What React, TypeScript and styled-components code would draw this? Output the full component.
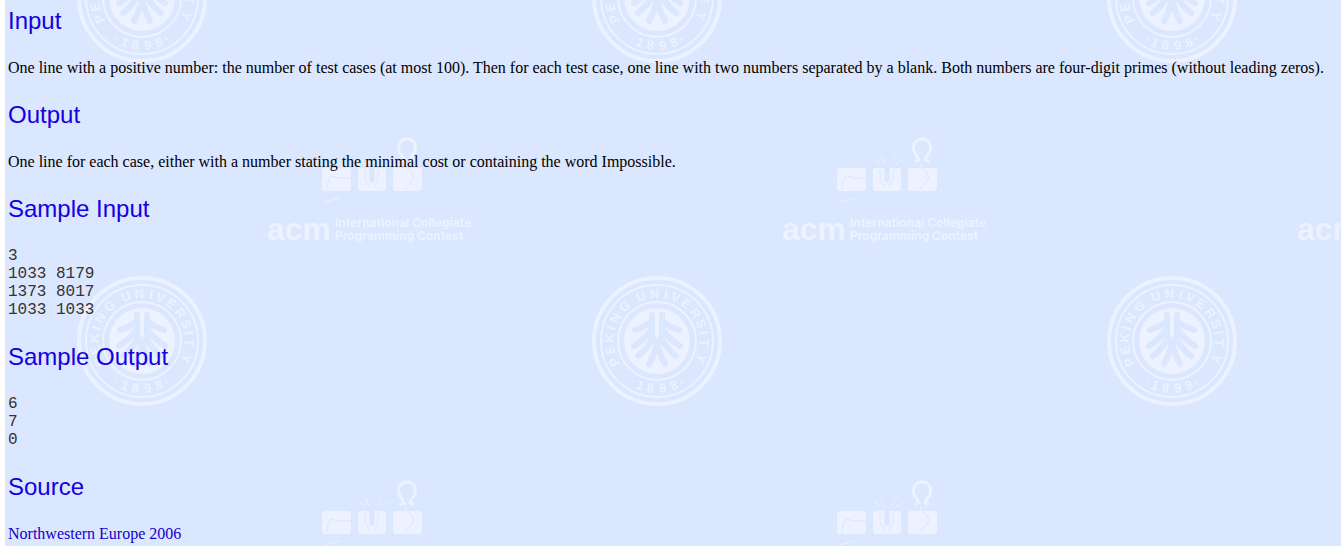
import React from "react";
import styled, { createGlobalStyle } from "styled-components";

const GlobalStyle = createGlobalStyle`
  body {
    margin: 0;
    background: #ffffff;
  }
`;

const Page = styled.main`
  position: relative;
  margin: 0 0 4px 5px;
  padding: 7px 3px 3px;
  background: #dbe6ff;
  overflow: hidden;
`;

const Backdrop = styled.svg`
  position: absolute;
  top: 0;
  left: 0;
  width: 100%;
  height: 100%;
  pointer-events: none;
`;

const Content = styled.article`
  position: relative;
  display: flex;
  flex-direction: column;
  gap: 24px;
`;

const Section = styled.section`
  display: flex;
  flex-direction: column;
  gap: 24px;
`;

const Heading = styled.h2`
  margin: 0;
  color: #1400e0;
  font: 400 24px/28px Arial, "Liberation Sans", sans-serif;
`;

const Paragraph = styled.p`
  margin: 0;
  color: #000000;
  font: 400 16px/18px "Times New Roman", "Liberation Serif", serif;
`;

const Sample = styled.pre`
  margin: 0;
  color: #333333;
  font: 400 16px/18px "Courier New", "Liberation Mono", monospace;
`;

const SourceLink = styled.a`
  color: #1400c8;
  text-decoration: none;
`;

const SealLetter = styled.text`
  font: 700 13px "Liberation Sans", sans-serif;
  text-anchor: middle;
`;

const AcmText = styled.text`
  font: 700 32px "Liberation Sans", sans-serif;
`;

const ContestText = styled.text`
  font: 700 12px Inter, "Liberation Sans", sans-serif;
`;

const MARK = "#ecf2ff";
const PAPER = "#dbe6ff";

// Each letter of the seal with its angle, clockwise from the top.
const SEAL_NAME: [string, number][] = [
  ["P", -116],
  ["E", -101],
  ["K", -86],
  ["I", -74],
  ["N", -61],
  ["G", -43],
  ["U", -20],
  ["N", -3],
  ["I", 11],
  ["V", 23],
  ["E", 38],
  ["R", 54],
  ["S", 69],
  ["I", 80],
  ["T", 92],
  ["Y", 112],
];

// The year reads upright along the bottom of the ring.
const SEAL_YEAR: [string, number][] = [
  ["·", 31],
  ["1", 21],
  ["8", 8],
  ["9", -7],
  ["8", -21],
  ["·", -31],
];

function Seal() {
  return (
    <g transform="translate(137 66)" fill="none" stroke={MARK}>
      <circle r="63" strokeWidth="4" />
      <circle r="56" strokeWidth="2" />
      <circle r="39" strokeWidth="2" />
      <circle r="33" fill={MARK} stroke="none" />
      <g stroke={PAPER} strokeWidth="6" strokeLinecap="round" strokeLinejoin="round">
        <path d="M-5 -26 V-4 L0 4 M-5 -20 Q-12 -14 -22 -11 M-5 -12 Q-12 -2 -23 5 M-4 -3 Q-10 8 -19 15 M0 2 Q-3 14 -8 23" />
        <path d="M5 -26 V-4 L0 4 M5 -20 Q12 -14 22 -11 M5 -12 Q12 -2 23 5 M4 -3 Q10 8 19 15 M0 2 Q3 14 8 23" />
      </g>
      <path d="M0 -29 V-8" strokeWidth="4" />
      <g fill={MARK} stroke="none">
        {SEAL_NAME.map(([letter, angle]) => (
          <SealLetter key={angle} y="-43" transform={`rotate(${angle})`}>
            {letter}
          </SealLetter>
        ))}
        {SEAL_YEAR.map(([digit, angle]) => (
          <SealLetter key={angle} y="52" transform={`rotate(${angle})`}>
            {digit}
          </SealLetter>
        ))}
      </g>
    </g>
  );
}

function ContestLogo() {
  return (
    <g>
      <g fill={MARK}>
        <rect x="317" y="236" width="29" height="23" rx="3" />
        <rect x="353" y="236" width="28" height="23" rx="3" />
        <rect x="388" y="236" width="29" height="23" rx="3" />
        <AcmText x="262" y="308">
          acm
        </AcmText>
        <ContestText x="330" y="295">
          International Collegiate
        </ContestText>
        <ContestText x="330" y="308">
          Programming Contest
        </ContestText>
      </g>
      <g fill="none" stroke={MARK} strokeWidth="2" strokeLinecap="round">
        <path
          strokeWidth="3"
          d="M396 229 L399 228 Q398 225 395 221 C391 214 395 207 402 207 C409 207 413 214 409 221 Q406 225 405 228 L408 229"
        />
        <path d="M401 231 v5" strokeWidth="1" />
        <path
          strokeWidth="1"
          d="M354 226 l6 6 M361 224 l3 7 M376 223 l-4 7 M383 227 l-7 5 M320 270 l14 -4"
        />
      </g>
      <g fill="none" stroke={PAPER} strokeWidth="1" strokeLinecap="round">
        <path d="M346 246 H335 L326 244 L323 249 L322 257" />
        <path d="M359 238 Q361 240 360 247 L364 255 M374 238 Q372 242 373 247 L369 255" />
        <path d="M367 236 V248" strokeWidth="5" />
        <path d="M402 236 Q412 243 407 249 L400 257" />
      </g>
    </g>
  );
}

function Watermark() {
  return (
    <Backdrop aria-hidden="true">
      <defs>
        <pattern id="watermark" patternUnits="userSpaceOnUse" y="-68" width="515" height="343">
          <Seal />
          <ContestLogo />
        </pattern>
      </defs>
      <rect width="100%" height="100%" fill="url(#watermark)" />
    </Backdrop>
  );
}

export default function App() {
  return (
    <>
      <GlobalStyle />
      <Page>
        <Watermark />
        <Content>
          <Section>
            <Heading>Input</Heading>
            <Paragraph>
              One line with a positive number: the number of test cases (at most 100). Then for each test case, one
              line with two numbers separated by a blank. Both numbers are four-digit primes (without leading zeros).
            </Paragraph>
          </Section>
          <Section>
            <Heading>Output</Heading>
            <Paragraph>
              One line for each case, either with a number stating the minimal cost or containing the word Impossible.
            </Paragraph>
          </Section>
          <Section>
            <Heading>Sample Input</Heading>
            <Sample>{"3\n1033 8179\n1373 8017\n1033 1033"}</Sample>
          </Section>
          <Section>
            <Heading>Sample Output</Heading>
            <Sample>{"6\n7\n0"}</Sample>
          </Section>
          <Section>
            <Heading>Source</Heading>
            <Paragraph>
              <SourceLink href="#source">Northwestern Europe 2006</SourceLink>
            </Paragraph>
          </Section>
        </Content>
      </Page>
    </>
  );
}
